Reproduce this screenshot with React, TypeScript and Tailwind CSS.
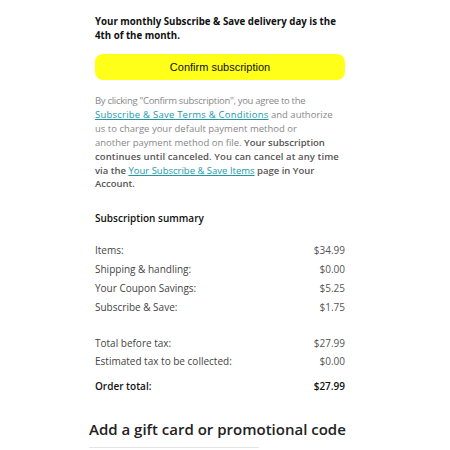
import React from "react";

const rows1 = [
  ["Items:", "$34.99"],
  ["Shipping & handling:", "$0.00"],
  ["Your Coupon Savings:", "$5.25"],
  ["Subscribe & Save:", "$1.75"],
];
const rows2 = [
  ["Total before tax:", "$27.99"],
  ["Estimated tax to be collected:", "$0.00"],
];

export default function App() {
  return (
    <div className="w-[450px] h-[450px] bg-white overflow-hidden" style={{ fontFamily: '"Open Sans", sans-serif' }}>
      <div className="ml-[95px] w-[250px] pt-[15px]">
        <p className="text-[9.7px] leading-[14px] font-bold text-[#111]">
          Your monthly Subscribe &amp; Save delivery day is the 4th of the month.
        </p>
        <button className="mt-[11px] w-full h-[26px] rounded-[8px] bg-[#ffff1a] text-[11px] text-[#111]" style={{ fontFamily: '"Liberation Sans", Arial, sans-serif' }}>
          Confirm subscription
        </button>
        <p className="mt-[14px] text-[9.5px] leading-[13.9px] text-[#888] whitespace-nowrap">
          <span className="tracking-[-0.3px]">By clicking "Confirm subscription", you agree to the</span>
          <br />
          <span className="text-[#1a9aa8] underline tracking-[0.23px]">Subscribe &amp; Save Terms &amp; Conditions</span> and authorize
          <br />
          us to charge your default payment method or
          <br />
          another payment method on file.{" "}
          <span className="font-semibold text-[#555]">Your subscription</span>
          <br />
          <span className="font-semibold text-[#555] tracking-[0.1px]">continues until canceled. You can cancel at any time</span>
          <br />
          <span className="font-semibold text-[#555]">via the </span>
          <span className="text-[#1a9aa8] underline">Your Subscribe &amp; Save Items</span>
          <span className="font-semibold text-[#555]"> page in Your</span>
          <br />
          <span className="font-semibold text-[#555]">Account.</span>
        </p>
        <p className="mt-[20px] text-[10px] font-semibold text-[#111] leading-[14px]">Subscription summary</p>
        <div className="mt-[18px] flex flex-col gap-[5px] text-[10px] text-[#444] leading-[14px]">
          {rows1.map(([a, b]) => (
            <div key={a} className="flex justify-between"><span>{a}</span><span className="text-[#555]">{b}</span></div>
          ))}
        </div>
        <div className="mt-[22px] flex flex-col gap-[4px] text-[10px] text-[#444] leading-[14px]">
          {rows2.map(([a, b]) => (
            <div key={a} className="flex justify-between"><span>{a}</span><span className="text-[#555]">{b}</span></div>
          ))}
        </div>
        <div className="mt-[11px] flex justify-between text-[10px] font-semibold text-[#111] leading-[14px]">
          <span>Order total:</span><span>$27.99</span>
        </div>
        <p className="mt-[26px] -ml-[6px] text-[15px] font-semibold text-[#222] leading-[20px] whitespace-nowrap">Add a gift card or promotional code</p>
        <div className="mt-[8px] -ml-[6px] w-[170px] h-px bg-[#e5e5e5]" />
      </div>
    </div>
  );
}
